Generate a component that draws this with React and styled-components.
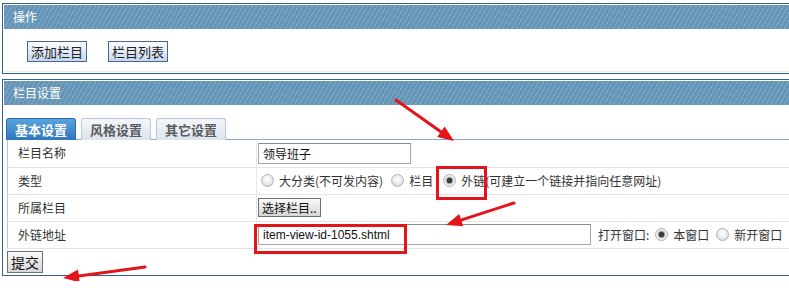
import React from 'react';
import styled, { createGlobalStyle } from 'styled-components';

const GlobalStyle = createGlobalStyle`
  body {
    margin: 0;
    background: #fff;
    font-family: "Noto Sans CJK SC", "Liberation Sans", sans-serif;
    font-size: 12px;
    color: #333;
    overflow: hidden;
  }
`;

const Page = styled.div`
  position: relative;
  width: 800px;
  padding: 3px 0 0 2px;
`;

const Panel = styled.div`
  border: 1px solid #34608e;
  padding: 1px;
  margin-bottom: 5px;
  background: #fff;
`;

const PanelHead = styled.div`
  height: 24px;
  line-height: 24px;
  padding-left: 9px;
  color: #fff;
  font-size: 12px;
  background: repeating-linear-gradient(120deg, #6594b5 0 3px, #7aa8c7 3px 4px);
`;

const ActionBar = styled.div`
  height: 43px;
  border-bottom: 1px solid #f1eed9;
  display: flex;
  align-items: flex-start;
  gap: 21px;
  padding: 12px 0 0 23px;
  box-sizing: border-box;
`;

const ActionButton = styled.button`
  font: 13px/19px "Noto Sans CJK SC", sans-serif;
  height: 21px;
  padding: 0 3px;
  border: 1px solid #46688f;
  background: linear-gradient(#fdfdff, #c7d6f0);
  color: #222;
`;

const PanelBody = styled.div`
  padding: 12px 0 1px 3px;
`;

const TabBar = styled.div`
  display: flex;
  gap: 5px;
  height: 22px;
  border-bottom: 1px solid #8ea7c9;
  margin-left: -1px;
`;

const Tab = styled.div`
  width: 68px;
  height: 21px;
  margin-top: 1px;
  border: 1px solid ${p => (p.$active ? '#2b6eb0' : '#b7c6d8')};
  border-bottom: none;
  border-radius: 3px 3px 0 0;
  text-align: center;
  font-size: 13px;
  font-weight: bold;
  line-height: 21px;
  color: ${p => (p.$active ? '#fff' : '#5c5c5c')};
  background: ${p =>
    p.$active
      ? 'linear-gradient(#5aa3dd, #2e77bf)'
      : 'linear-gradient(#f4f7fb, #dbe3ed)'};
`;

const Table = styled.table`
  border-collapse: collapse;
  width: 790px;
  border-left: 1px solid #bcc6d2;
`;

const Row = styled.tr`
  height: 27px;
  border-bottom: 1px solid #e3e3e3;
`;

const LabelCell = styled.td`
  width: 238px;
  padding: 0 0 0 10px;
  border-right: 1px solid #e6e6e6;
  line-height: 16px;
  color: #333;
`;

const ValueCell = styled.td`
  padding: 0 0 0 1px;
  white-space: nowrap;
`;

const Inline = styled.div`
  display: flex;
  align-items: center;
`;

const TextInput = styled.input`
  box-sizing: border-box;
  width: ${p => p.$width}px;
  height: ${p => p.$height}px;
  margin: 0;
  padding: 0 4px;
  border: 1px solid #a6a6a6;
  border-top-color: #8a8a8a;
  font: 12px ${p => (p.$cjk ? '"Noto Sans CJK SC"' : '"Liberation Sans", "Noto Sans CJK SC"')}, sans-serif;
  color: #111;
  outline: none;
`;

const Radio = styled.span`
  display: inline-block;
  box-sizing: border-box;
  width: 13px;
  height: 13px;
  border-radius: 50%;
  border: 1px solid #b4b4b4;
  margin: 0 5px 0 ${p => p.$gap}px;
  background: ${p =>
    p.$checked
      ? 'radial-gradient(circle, #3c3c3c 0 2.5px, #9a9a9a 3px, #e2e2e2 4px, #fafafa 6px)'
      : 'radial-gradient(circle at 50% 40%, #fff 0, #e8e8e8 5px, #cfcfcf 7px)'};
`;

const OptionText = styled.span`
  line-height: 16px;
  margin-left: ${p => p.$indent || 0}px;
`;

const GrayButton = styled.button`
  font: ${p => p.$size}px/1 "Noto Sans CJK SC", sans-serif;
  height: ${p => p.$height}px;
  padding: 0 3px;
  border: 1px solid #6f6f6f;
  background: linear-gradient(#fafafa, #d6d6d6);
  color: #111;
`;

const SubmitRow = styled.div`
  margin-top: 2px;
`;

const Overlay = styled.svg`
  position: absolute;
  top: 0;
  left: 0;
  pointer-events: none;
`;

const RED = '#e3151b';

function Arrow({ x1, y1, x2, y2 }) {
  const dx = x2 - x1;
  const dy = y2 - y1;
  const len = Math.hypot(dx, dy);
  const ux = dx / len;
  const uy = dy / len;
  const hl = 16;
  const hw = 6.5;
  const bx = x2 - ux * hl;
  const by = y2 - uy * hl;
  const pts = [
    [x2, y2],
    [bx - uy * hw, by + ux * hw],
    [bx + uy * hw, by - ux * hw],
  ]
    .map(p => p.join(','))
    .join(' ');
  return (
    <g>
      <line x1={x1} y1={y1} x2={bx + ux * 2} y2={by + uy * 2} stroke={RED} strokeWidth="3" strokeLinecap="round" />
      <polygon points={pts} fill={RED} />
    </g>
  );
}

export default function App() {
  return (
    <Page>
      <GlobalStyle />
      <Panel>
        <PanelHead>操作</PanelHead>
        <ActionBar>
          <ActionButton>添加栏目</ActionButton>
          <ActionButton>栏目列表</ActionButton>
        </ActionBar>
      </Panel>

      <Panel>
        <PanelHead>栏目设置</PanelHead>
        <PanelBody>
          <TabBar>
            <Tab $active>基本设置</Tab>
            <Tab>风格设置</Tab>
            <Tab>其它设置</Tab>
          </TabBar>
          <Table>
            <tbody>
              <Row>
                <LabelCell>栏目名称</LabelCell>
                <ValueCell>
                  <Inline>
                    <TextInput $cjk $width={153} $height={21} defaultValue="领导班子" />
                  </Inline>
                </ValueCell>
              </Row>
              <Row>
                <LabelCell>类型</LabelCell>
                <ValueCell>
                  <Inline>
                    <Radio $gap={3} />
                    <OptionText>大分类(不可发内容)</OptionText>
                    <Radio $gap={8} />
                    <OptionText>栏目</OptionText>
                    <Radio $gap={10} $checked />
                    <OptionText>外链(可建立一个链接并指向任意网址)</OptionText>
                  </Inline>
                </ValueCell>
              </Row>
              <Row>
                <LabelCell>所属栏目</LabelCell>
                <ValueCell>
                  <Inline>
                    <GrayButton $size={12} $height={19}>选择栏目..</GrayButton>
                  </Inline>
                </ValueCell>
              </Row>
              <Row>
                <LabelCell>外链地址</LabelCell>
                <ValueCell>
                  <Inline>
                    <TextInput $width={333} $height={21} defaultValue="item-view-id-1055.shtml" />
                    <OptionText $indent={7}>打开窗口:</OptionText>
                    <Radio $gap={6} $checked />
                    <OptionText>本窗口</OptionText>
                    <Radio $gap={7} />
                    <OptionText>新开窗口</OptionText>
                  </Inline>
                </ValueCell>
              </Row>
            </tbody>
          </Table>
          <SubmitRow>
            <GrayButton $size={14} $height={22}>提交</GrayButton>
          </SubmitRow>
        </PanelBody>
      </Panel>

      <Overlay width="789" height="288" viewBox="0 0 789 288">
        <rect x="437.5" y="167.5" width="48" height="31" fill="none" stroke={RED} strokeWidth="3" />
        <rect x="255.5" y="225.5" width="150" height="27" fill="none" stroke={RED} strokeWidth="3" />
        <Arrow x1={396} y1={100} x2={454} y2={141} />
        <Arrow x1={514} y1={203} x2={446} y2={225} />
        <Arrow x1={145} y1={267} x2={63} y2={278} />
      </Overlay>
    </Page>
  );
}
